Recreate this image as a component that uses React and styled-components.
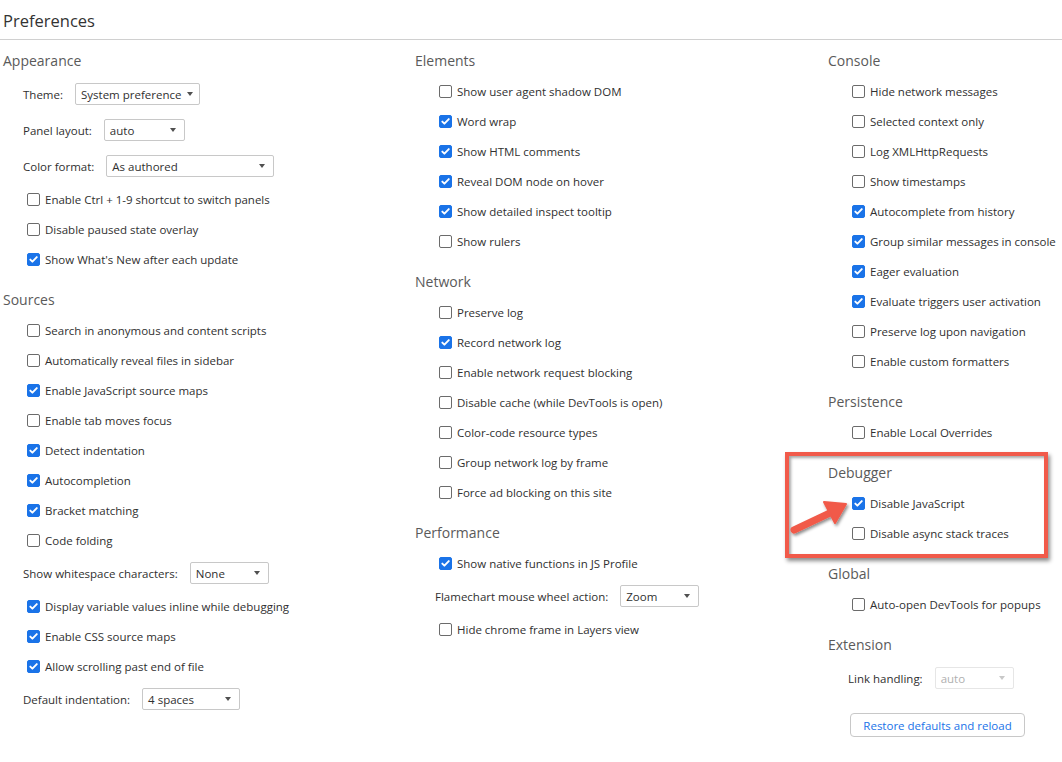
import React from 'react';
import styled, { createGlobalStyle } from 'styled-components';

const GlobalStyle = createGlobalStyle`
  html, body { margin: 0; padding: 0; background: #fff; }
  body { font-family: "Open Sans", "Noto Sans", sans-serif; color: #303030; }
`;

const columns = [
  [
    {
      title: 'Appearance',
      items: [
        { type: 'select', label: 'Theme:', value: 'System preference', width: 125 },
        { type: 'select', label: 'Panel layout:', value: 'auto', width: 81 },
        { type: 'select', label: 'Color format:', value: 'As authored', width: 168 },
        { type: 'check', label: 'Enable Ctrl + 1-9 shortcut to switch panels' },
        { type: 'check', label: 'Disable paused state overlay' },
        { type: 'check', label: "Show What's New after each update", checked: true },
      ],
    },
    {
      title: 'Sources',
      items: [
        { type: 'check', label: 'Search in anonymous and content scripts' },
        { type: 'check', label: 'Automatically reveal files in sidebar' },
        { type: 'check', label: 'Enable JavaScript source maps', checked: true },
        { type: 'check', label: 'Enable tab moves focus' },
        { type: 'check', label: 'Detect indentation', checked: true },
        { type: 'check', label: 'Autocompletion', checked: true },
        { type: 'check', label: 'Bracket matching', checked: true },
        { type: 'check', label: 'Code folding' },
        { type: 'select', label: 'Show whitespace characters:', value: 'None', width: 79 },
        { type: 'check', label: 'Display variable values inline while debugging', checked: true },
        { type: 'check', label: 'Enable CSS source maps', checked: true },
        { type: 'check', label: 'Allow scrolling past end of file', checked: true },
        { type: 'select', label: 'Default indentation:', value: '4 spaces', width: 98 },
      ],
    },
  ],
  [
    {
      title: 'Elements',
      items: [
        { type: 'check', label: 'Show user agent shadow DOM' },
        { type: 'check', label: 'Word wrap', checked: true },
        { type: 'check', label: 'Show HTML comments', checked: true },
        { type: 'check', label: 'Reveal DOM node on hover', checked: true },
        { type: 'check', label: 'Show detailed inspect tooltip', checked: true },
        { type: 'check', label: 'Show rulers' },
      ],
    },
    {
      title: 'Network',
      items: [
        { type: 'check', label: 'Preserve log' },
        { type: 'check', label: 'Record network log', checked: true },
        { type: 'check', label: 'Enable network request blocking' },
        { type: 'check', label: 'Disable cache (while DevTools is open)' },
        { type: 'check', label: 'Color-code resource types' },
        { type: 'check', label: 'Group network log by frame' },
        { type: 'check', label: 'Force ad blocking on this site' },
      ],
    },
    {
      title: 'Performance',
      items: [
        { type: 'check', label: 'Show native functions in JS Profile', checked: true },
        { type: 'select', label: 'Flamechart mouse wheel action:', value: 'Zoom', width: 79 },
        { type: 'check', label: 'Hide chrome frame in Layers view' },
      ],
    },
  ],
  [
    {
      title: 'Console',
      items: [
        { type: 'check', label: 'Hide network messages' },
        { type: 'check', label: 'Selected context only' },
        { type: 'check', label: 'Log XMLHttpRequests' },
        { type: 'check', label: 'Show timestamps' },
        { type: 'check', label: 'Autocomplete from history', checked: true },
        { type: 'check', label: 'Group similar messages in console', checked: true },
        { type: 'check', label: 'Eager evaluation', checked: true },
        { type: 'check', label: 'Evaluate triggers user activation', checked: true },
        { type: 'check', label: 'Preserve log upon navigation' },
        { type: 'check', label: 'Enable custom formatters' },
      ],
    },
    {
      title: 'Persistence',
      items: [{ type: 'check', label: 'Enable Local Overrides' }],
    },
    {
      title: 'Debugger',
      items: [
        { type: 'check', label: 'Disable JavaScript', checked: true },
        { type: 'check', label: 'Disable async stack traces' },
      ],
    },
    {
      title: 'Global',
      items: [{ type: 'check', label: 'Auto-open DevTools for popups' }],
    },
    {
      title: 'Extension',
      items: [{ type: 'select', label: 'Link handling:', value: 'auto', width: 79, disabled: true }],
      footer: true,
    },
  ],
];

const Checkbox = ({ checked }) => (
  <Box $checked={checked}>
    {checked && (
      <svg width="11" height="11" viewBox="0 0 11 11">
        <path d="M2.3 5.6 L4.4 7.7 L8.8 3.1" fill="none" stroke="#fff" strokeWidth="1.9" strokeLinecap="round" strokeLinejoin="round" />
      </svg>
    )}
  </Box>
);

const Select = ({ value, width, disabled }) => (
  <SelectBox style={{ width }} $disabled={disabled}>
    <span>{value}</span>
    <Caret $disabled={disabled} />
  </SelectBox>
);

const Item = ({ item }) => {
  if (item.type === 'select') {
    return (
      <SelectRow>
        <SelectLabel>{item.label}</SelectLabel>
        <Select value={item.value} width={item.width} disabled={item.disabled} />
      </SelectRow>
    );
  }
  return (
    <CheckRow>
      <Checkbox checked={item.checked} />
      <span>{item.label}</span>
    </CheckRow>
  );
};

const App = () => {
  return (
    <Page>
      <GlobalStyle />
      <Header>Preferences</Header>
      <Columns>
        {columns.map((col, ci) => (
          <Column key={ci}>
            {col.map((sec) => (
              <Section key={sec.title}>
                <SectionTitle>{sec.title}</SectionTitle>
                {sec.items.map((it) => (
                  <Item key={it.label} item={it} />
                ))}
                {sec.footer && <RestoreButton>Restore defaults and reload</RestoreButton>}
              </Section>
            ))}
          </Column>
        ))}
      </Columns>
      <Highlight />
      <Arrow width="70" height="44" viewBox="0 0 70 44">
        <defs>
          <filter id="sh" x="-30%" y="-30%" width="160%" height="160%">
            <feDropShadow dx="1.5" dy="2" stdDeviation="1.5" floodColor="#000" floodOpacity="0.45" />
          </filter>
        </defs>
        <g filter="url(#sh)">
          <path d="M6 34 L44 16" stroke="#f15a4a" strokeWidth="7" strokeLinecap="round" />
          <path d="M58 8 L36 6 L47 27 Z" fill="#f15a4a" stroke="#f15a4a" strokeWidth="2" strokeLinejoin="round" />
        </g>
      </Arrow>
    </Page>
  );
};

const Page = styled.div`
  position: relative;
  width: 1062px;
  height: 762px;
  overflow: hidden;
  font-size: 11.5px;
`;

const Header = styled.div`
  height: 40px;
  line-height: 42px;
  padding-left: 3px;
  font-size: 16.5px;
  color: #333;
  border-bottom: 1px solid #d0d0d0;
  box-sizing: border-box;
`;

const Columns = styled.div`
  display: grid;
  grid-template-columns: 412px 413px 1fr;
  padding: 6px 0 0 3px;
`;

const Column = styled.div`
  display: flex;
  flex-direction: column;
`;

const Section = styled.div`
  display: flex;
  flex-direction: column;
  & + & {
    margin-top: 11px;
  }
`;

const SectionTitle = styled.div`
  height: 30px;
  line-height: 30px;
  font-size: 14px;
  color: #5a5a5a;
`;

const CheckRow = styled.div`
  height: 30px;
  display: flex;
  align-items: center;
  padding-left: 24px;
  gap: 5px;
  color: #303030;
  white-space: nowrap;
`;

const Box = styled.span`
  width: 13px;
  height: 13px;
  box-sizing: border-box;
  border-radius: 2px;
  border: 1px solid ${(p) => (p.$checked ? '#1a73e8' : '#6b6b6b')};
  background: ${(p) => (p.$checked ? '#1a73e8' : '#fff')};
  display: flex;
  align-items: center;
  justify-content: center;
  flex-shrink: 0;
`;

const SelectRow = styled.div`
  height: 36px;
  display: flex;
  align-items: center;
  padding-left: 20px;
  gap: 12px;
  white-space: nowrap;
`;

const SelectLabel = styled.span`
  color: #303030;
`;

const SelectBox = styled.div`
  height: 22px;
  box-sizing: border-box;
  border: 1px solid ${(p) => (p.$disabled ? '#e6e6e6' : '#c8c8c8')};
  border-radius: 2px;
  background: #fff;
  display: flex;
  align-items: center;
  justify-content: space-between;
  gap: 6px;
  padding: 0 8px 0 5px;
  color: ${(p) => (p.$disabled ? '#b0b0b0' : '#303030')};
`;

const Caret = styled.span`
  width: 0;
  height: 0;
  flex-shrink: 0;
  border-left: 3.5px solid transparent;
  border-right: 3.5px solid transparent;
  border-top: 4px solid ${(p) => (p.$disabled ? '#c8c8c8' : '#505050')};
`;

const RestoreButton = styled.button`
  align-self: flex-start;
  margin: 17px 0 0 22px;
  width: 175px;
  height: 24px;
  border: 1px solid #c8c8c8;
  border-radius: 4px;
  background: #fff;
  color: #1a73e8;
  font-family: inherit;
  font-size: 11.5px;
  padding: 0;
`;

const Highlight = styled.div`
  position: absolute;
  left: 785px;
  top: 452px;
  width: 263px;
  height: 106px;
  box-sizing: border-box;
  border: 4px solid #f15a4a;
  box-shadow: 2px 3px 4px rgba(0, 0, 0, 0.45), inset 2px 2px 3px rgba(0, 0, 0, 0.35);
`;

const Arrow = styled.svg`
  position: absolute;
  left: 788px;
  top: 496px;
`;

export default App;
